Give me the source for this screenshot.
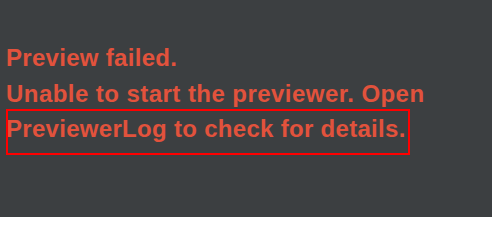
export default function App() {
  return (
    <div className="w-[492px] h-[217px] bg-[#3c3f41] overflow-hidden pt-[40px] pl-[6px]">
      <div
        className="text-[#e2523c] font-bold text-[24px] leading-[36px] tracking-[0.3px] whitespace-nowrap"
        style={{ fontFamily: '"Liberation Sans", Arial, sans-serif' }}
      >
        <div className="h-[36px]">Preview failed.</div>
        <div className="h-[36px] tracking-[0.45px]">Unable to start the previewer. Open</div>
        <div className="-mt-[3px] h-[46px] w-[404px] pt-[2px] outline-2 outline-[#ff0000] -outline-offset-2">
          PreviewerLog to check for details.
        </div>
      </div>
    </div>
  );
}
